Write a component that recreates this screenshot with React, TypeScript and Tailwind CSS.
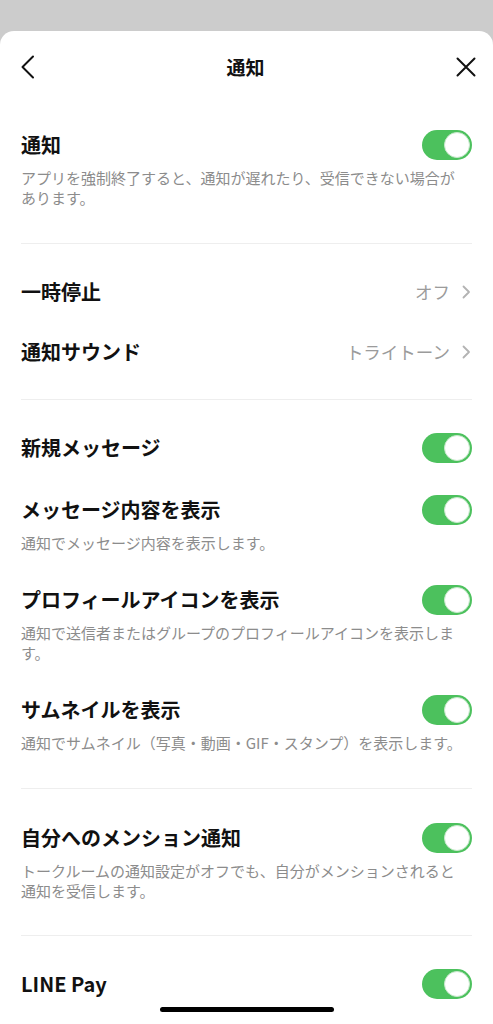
import React from "react";

const FONT = { fontFamily: '"Noto Sans CJK JP", "Noto Sans", sans-serif' };

function Toggle() {
  return (
    <div className="relative w-[50px] h-[30px] rounded-full bg-[#4cc15d] shrink-0">
      <div className="absolute right-[2px] top-[2px] w-[26px] h-[26px] rounded-full bg-white border border-[#c9e8cd]" />
    </div>
  );
}

function ChevronRight() {
  return (
    <svg width="9" height="14" viewBox="0 0 9 14" className="shrink-0">
      <path d="M1.5 1.5 L7 7 L1.5 12.5" fill="none" stroke="#b3b3b3" strokeWidth="1.8" strokeLinecap="round" strokeLinejoin="round" />
    </svg>
  );
}

function ToggleItem({ title, desc }: { title: string; desc?: string }) {
  return (
    <div className="py-4">
      <div className="h-[30px] flex items-center justify-between">
        <span className="text-[20px] font-bold text-[#111111] leading-none">{title}</span>
        <Toggle />
      </div>
      {desc && (
        <p className="mt-2 pr-[10px] text-[15px] leading-[20px] text-[#8c8c8c]">{desc}</p>
      )}
    </div>
  );
}

function ValueRow({ title, value }: { title: string; value: string }) {
  return (
    <div className="h-[60px] flex items-center justify-between">
      <span className="text-[20px] font-bold text-[#111111] leading-none">{title}</span>
      <div className="flex items-center gap-[12px] pr-[1px]">
        <span className="text-[17.5px] text-[#9b9b9b] leading-none">{value}</span>
        <ChevronRight />
      </div>
    </div>
  );
}

export default function App() {
  return (
    <div className="w-[493px] h-[1024px] overflow-hidden bg-[#cccccc] pt-[31px]" style={FONT}>
      <div className="relative h-[993px] bg-white rounded-t-[14px] overflow-hidden">
        {/* Header */}
        <div className="h-[72px] flex items-center justify-between px-[20px]">
          <svg width="16" height="24" viewBox="0 0 16 24">
            <path d="M13 1.5 L2.5 12 L13 22.5" fill="none" stroke="#111" strokeWidth="2" strokeLinecap="round" strokeLinejoin="round" />
          </svg>
          <span className="text-[19px] font-bold text-[#111111]">通知</span>
          <svg width="22" height="22" viewBox="0 0 22 22" className="mr-[-4px]">
            <path d="M2.5 2.5 L19.5 19.5 M19.5 2.5 L2.5 19.5" fill="none" stroke="#111" strokeWidth="2" strokeLinecap="round" />
          </svg>
        </div>

        <div className="px-[21px]">
          <div className="pt-[11px] pb-[19px] border-b border-[#eeeeee]">
            <ToggleItem title="通知" desc="アプリを強制終了すると、通知が遅れたり、受信できない場合があります。" />
          </div>

          <div className="pt-[18px] pb-[17px] border-b border-[#eeeeee]">
            <ValueRow title="一時停止" value="オフ" />
            <ValueRow title="通知サウンド" value="トライトーン" />
          </div>

          <div className="pt-[17px] pb-[19px] border-b border-[#eeeeee]">
            <ToggleItem title="新規メッセージ" />
            <ToggleItem title="メッセージ内容を表示" desc="通知でメッセージ内容を表示します。" />
            <ToggleItem title="プロフィールアイコンを表示" desc="通知で送信者またはグループのプロフィールアイコンを表示します。" />
            <ToggleItem title="サムネイルを表示" desc="通知でサムネイル（写真・動画・GIF・スタンプ）を表示します。" />
          </div>

          <div className="pt-[18px] pb-[18px] border-b border-[#eeeeee]">
            <ToggleItem title="自分へのメンション通知" desc="トークルームの通知設定がオフでも、自分がメンションされると通知を受信します。" />
          </div>

          <div className="pt-[17px]">
            <ToggleItem title="LINE Pay" />
          </div>
        </div>

        <div className="absolute left-[160px] bottom-[12px] w-[174px] h-[5px] rounded-full bg-black" />
      </div>
    </div>
  );
}
